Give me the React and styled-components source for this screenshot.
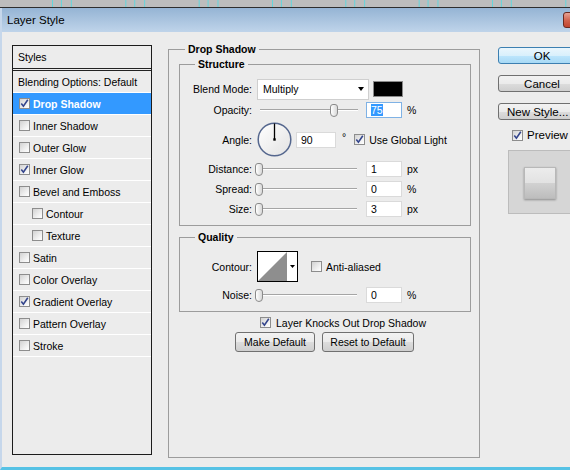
import React from 'react';
import styled, { createGlobalStyle } from 'styled-components';

const GlobalStyle = createGlobalStyle`
  html, body {
    margin: 0;
    padding: 0;
    background: #ececec;
  }
  body {
    font-family: "Liberation Sans", Arial, sans-serif;
    font-size: 10.5px;
    color: #000;
  }
`;

const Page = styled.div`
  width: 570px;
  height: 470px;
  overflow: hidden;
  display: flex;
  flex-direction: column;
  background: #ececec;
`;

/* the ruler strip of the canvas behind the dialog */
const Ruler = styled.div`
  flex: none;
  height: 7px;
  background-color: #bdbdbd;
  background-image: linear-gradient(
    90deg,
    #63d6dc 0 1px,
    transparent 1px 9px,
    #63d6dc 9px 10px,
    transparent 10px 19px,
    #63d6dc 19px 20px,
    transparent 20px
  );
  background-size: 73.33px 100%;
  background-position: 52px 0;
  background-repeat: repeat-x;
  border-bottom: 1px solid #2e2e2e;
`;

const Window = styled.div`
  flex: 1;
  display: flex;
  flex-direction: column;
  border-left: 2px solid #c6d7eb;
  border-bottom: 3px solid #56c2e5;
  min-height: 0;
`;

const TitleBar = styled.div`
  flex: none;
  height: 24px;
  display: flex;
  align-items: center;
  justify-content: space-between;
  padding-left: 5px;
  background: linear-gradient(#95b4d4, #bfd4ea);
  font-size: 11.5px;
`;

const CloseButton = styled.div`
  width: 43px;
  height: 16px;
  margin-right: -36px;
  box-sizing: border-box;
  border: 1px solid #6b2a20;
  border-radius: 3px;
  background: linear-gradient(#e8a294, #d0604a 55%, #c0452f);
`;

const Body = styled.div`
  flex: 1;
  display: flex;
  align-items: flex-start;
  padding-left: 10px;
  background: #ececec;
`;

/* ---------- left list ---------- */

const StylesPanel = styled.div`
  flex: none;
  width: 140px;
  height: 410px;
  margin-top: 13px;
  box-sizing: border-box;
  border: 1px solid #1c1c1c;
  background: #ececec;
`;

const PanelHeader = styled.div`
  height: 22px;
  line-height: 22px;
  padding-left: 5px;
  border-bottom: 3px double #222;
`;

const StyleRow = styled.div`
  height: 21px;
  display: flex;
  align-items: center;
  gap: 3px;
  padding-left: ${p => p.$indent}px;
  border-bottom: 1px solid #fff;
  background: ${p => (p.$selected ? '#3399ff' : 'transparent')};
  color: ${p => (p.$selected ? '#fff' : '#000')};
  font-weight: ${p => (p.$selected ? 'bold' : 'normal')};
`;

/* ---------- checkbox ---------- */

const Box = styled.span`
  flex: none;
  width: 11px;
  height: 11px;
  box-sizing: border-box;
  border: 1px solid #8d8d8d;
  background: linear-gradient(135deg, #d2d2d2 0%, #f4f4f4 70%, #fff 100%);
  display: inline-flex;
  align-items: center;
  justify-content: center;
  margin-left: ${p => p.$ml || 0}px;
`;

function Check({ checked, ml }) {
  return (
    <Box $ml={ml}>
      {checked && (
        <svg width="9" height="9" viewBox="0 0 9 9">
          <path d="M1.3 4.6 L3.4 7.2 L7.8 0.8" fill="none" stroke="#34458c" strokeWidth="1.6" />
        </svg>
      )}
    </Box>
  );
}

/* ---------- middle ---------- */

const Middle = styled.div`
  flex: none;
  margin-left: 16px;
  margin-top: 11px;
`;

const Group = styled.fieldset`
  margin: ${p => p.$mt || 0}px 0 0 0;
  padding: ${p => p.$pad};
  width: ${p => p.$w}px;
  height: ${p => (p.$h ? `${p.$h}px` : 'auto')};
  box-sizing: border-box;
  border: 1px solid #9c9c9c;
  min-width: 0;
`;

const Legend = styled.legend`
  font-weight: bold;
  padding: 0 3px;
  margin-left: ${p => p.$indent}px;
  line-height: 13px;
`;

const Row = styled.div`
  display: flex;
  align-items: center;
  height: ${p => p.$h}px;
  margin-top: ${p => p.$mt || 0}px;
  padding-left: ${p => p.$pl || 0}px;
`;

const Label = styled.span`
  flex: none;
  width: 72px;
  margin-right: 5px;
  text-align: right;
`;

const Select = styled.div`
  flex: none;
  width: 112px;
  height: 21px;
  box-sizing: border-box;
  border: 1px solid #cfcfcf;
  background: #fff;
  display: flex;
  align-items: center;
  justify-content: space-between;
  padding: 0 4px 0 5px;
`;

const Arrow = styled.span`
  width: 0;
  height: 0;
  border-left: 3.5px solid transparent;
  border-right: 3.5px solid transparent;
  border-top: 4px solid #000;
`;

const Swatch = styled.div`
  flex: none;
  width: 30px;
  height: 16px;
  margin-left: 4px;
  box-sizing: border-box;
  border: 1px solid #8a8a8a;
  background: #000;
`;

const Field = styled.div`
  flex: none;
  width: ${p => p.$w || 36}px;
  height: 16px;
  margin-left: ${p => p.$ml}px;
  box-sizing: border-box;
  border: 1px solid ${p => (p.$focus ? '#7fb2e5' : '#dadada')};
  background: #fff;
  padding-left: 4px;
  display: flex;
  align-items: center;
`;

const Selected = styled.span`
  background: #3399ff;
  color: #fff;
`;

const Unit = styled.span`
  margin-left: ${p => p.$ml || 5}px;
  align-self: ${p => (p.$top ? 'flex-start' : 'center')};
  margin-top: ${p => (p.$top ? 11 : 0)}px;
`;

const Track = styled.div`
  flex: none;
  position: relative;
  width: 98px;
  height: 2px;
  margin-left: ${p => p.$ml}px;
  box-sizing: border-box;
  border-top: 1px solid #a5a5a5;
  background: #fff;
`;

const Thumb = styled.div`
  position: absolute;
  top: -6px;
  width: 8px;
  height: 13px;
  box-sizing: border-box;
  border: 1px solid #8a8a8a;
  border-radius: 3px 3px 4px 4px;
  background: linear-gradient(90deg, #fff, #d8d8d8);
`;

function Slider({ value, ml = 2 }) {
  return (
    <Track $ml={ml}>
      <Thumb style={{ left: Math.round((value / 100) * 98) - 4 }} />
    </Track>
  );
}

function Dial() {
  return (
    <svg width="35" height="35" viewBox="0 0 35 35">
      <defs>
        <linearGradient id="dialfill" x1="0" y1="0" x2="1" y2="1">
          <stop offset="0" stopColor="#ffffff" />
          <stop offset="1" stopColor="#e2e2e2" />
        </linearGradient>
      </defs>
      <circle cx="17.5" cy="17.5" r="16.3" fill="url(#dialfill)" stroke="#55678e" strokeWidth="1.5" />
      <line x1="17.5" y1="17.5" x2="17.5" y2="1.5" stroke="#000" strokeWidth="1.3" />
      <rect x="16.3" y="16.3" width="2.4" height="2.4" fill="#000" />
    </svg>
  );
}

function ContourPicker() {
  return (
    <svg width="41" height="31" viewBox="0 0 41 31">
      <rect x="0.5" y="0.5" width="40" height="30" fill="#fff" stroke="#000" />
      <polygon points="1,30 30,1 30,30" fill="#8e8e8e" />
      <polygon points="33,14 38,14 35.5,17" fill="#000" />
    </svg>
  );
}

const ButtonRow = styled.div`
  display: flex;
  gap: 7px;
  margin-top: 2px;
  padding-left: 56px;
`;

const Button = styled.div`
  flex: none;
  width: ${p => p.$w}px;
  height: ${p => p.$h || 20}px;
  box-sizing: border-box;
  border: 1px solid ${p => (p.$primary ? '#3c7fb1' : '#707070')};
  border-radius: 3px;
  background: ${p =>
    p.$primary
      ? 'linear-gradient(#eaf6fd, #d9f0fc 50%, #bee6fd 50%, #a7d9f5)'
      : 'linear-gradient(#f2f2f2, #ebebeb 50%, #dddddd 50%, #cfcfcf)'};
  display: flex;
  align-items: center;
  justify-content: ${p => (p.$left ? 'flex-start' : 'center')};
  padding-left: ${p => (p.$left ? 8 : 0)}px;
  font-size: ${p => p.$fs || 10.5}px;
  margin-bottom: ${p => p.$mb || 0}px;
`;

/* ---------- right ---------- */

const Side = styled.div`
  flex: none;
  width: 88px;
  margin-left: 18px;
  margin-top: 15px;
  font-size: 11px;
`;

const PreviewToggle = styled.div`
  display: flex;
  align-items: center;
  gap: 4px;
  margin-top: 9px;
  padding-left: 14px;
  height: 12px;
  font-size: 11.5px;
`;

const PreviewBox = styled.div`
  width: 64px;
  height: 64px;
  margin-top: 9px;
  margin-left: 10px;
  box-sizing: border-box;
  border: 1px solid #bcbcbc;
  background: #d6d6d6;
  display: flex;
  justify-content: center;
  padding-top: 16px;
`;

const PreviewSwatch = styled.div`
  width: 32px;
  height: 32px;
  box-sizing: border-box;
  border: 1px solid #b8b8b8;
  background: linear-gradient(#ececec, #e2e2e2 50%, #d2d2d2 50%, #bdbdbd);
  box-shadow: 0 1px 2px rgba(0, 0, 0, 0.35);
`;

const listItems = [
  { label: 'Drop Shadow', checked: true, selected: true },
  { label: 'Inner Shadow' },
  { label: 'Outer Glow' },
  { label: 'Inner Glow', checked: true },
  { label: 'Bevel and Emboss' },
  { label: 'Contour', nested: true },
  { label: 'Texture', nested: true },
  { label: 'Satin' },
  { label: 'Color Overlay' },
  { label: 'Gradient Overlay', checked: true },
  { label: 'Pattern Overlay' },
  { label: 'Stroke' },
];

export default function App() {
  return (
    <Page>
      <GlobalStyle />
      <Ruler />
      <Window>
        <TitleBar>
          <span>Layer Style</span>
          <CloseButton />
        </TitleBar>
        <Body>
          <StylesPanel>
            <PanelHeader>Styles</PanelHeader>
            <StyleRow $indent={5}>Blending Options: Default</StyleRow>
            {listItems.map(item => (
              <StyleRow key={item.label} $indent={item.nested ? 19 : 6} $selected={item.selected}>
                <Check checked={item.checked} />
                <span>{item.label}</span>
              </StyleRow>
            ))}
          </StylesPanel>

          <Middle>
            <Group $w={312} $h={415} $pad="0 9px 0 10px">
              <Legend $indent={6}>Drop Shadow</Legend>

              <Group $w={292} $mt={2} $pad="7px 0 6px 0">
                <Legend $indent={15}>Structure</Legend>
                <Row $h={22}>
                  <Label>Blend Mode:</Label>
                  <Select>
                    <span>Multiply</span>
                    <Arrow />
                  </Select>
                  <Swatch />
                </Row>
                <Row $h={20}>
                  <Label>Opacity:</Label>
                  <Slider value={75} ml={3} />
                  <Field $ml={8} $focus>
                    <Selected>75</Selected>
                  </Field>
                  <Unit>%</Unit>
                </Row>
                <Row $h={39}>
                  <Label>Angle:</Label>
                  <Dial />
                  <Field $ml={4} $w={40}>90</Field>
                  <Unit $ml={6} $top>°</Unit>
                  <Check checked ml={8} />
                  <Unit $ml={4}>Use Global Light</Unit>
                </Row>
                <Row $h={20}>
                  <Label>Distance:</Label>
                  <Slider value={0} />
                  <Field $ml={9}>1</Field>
                  <Unit>px</Unit>
                </Row>
                <Row $h={20}>
                  <Label>Spread:</Label>
                  <Slider value={0} />
                  <Field $ml={9}>0</Field>
                  <Unit>%</Unit>
                </Row>
                <Row $h={20}>
                  <Label>Size:</Label>
                  <Slider value={0} />
                  <Field $ml={9}>3</Field>
                  <Unit>px</Unit>
                </Row>
              </Group>

              <Group $w={292} $mt={5} $pad="7px 0 6px 0">
                <Legend $indent={15}>Quality</Legend>
                <Row $h={31}>
                  <Label>Contour:</Label>
                  <ContourPicker />
                  <Check ml={13} />
                  <Unit $ml={4}>Anti-aliased</Unit>
                </Row>
                <Row $h={20} $mt={3}>
                  <Label>Noise:</Label>
                  <Slider value={0} />
                  <Field $ml={9}>0</Field>
                  <Unit>%</Unit>
                </Row>
              </Group>

              <Row $h={15} $mt={3} $pl={81}>
                <Check checked />
                <Unit $ml={5}>Layer Knocks Out Drop Shadow</Unit>
              </Row>
              <ButtonRow>
                <Button $w={80}>Make Default</Button>
                <Button $w={92}>Reset to Default</Button>
              </ButtonRow>
            </Group>
          </Middle>

          <Side>
            <Button $w={88} $h={17} $mb={11} $fs={11.5} $primary>OK</Button>
            <Button $w={88} $h={17} $mb={11} $fs={11.5}>Cancel</Button>
            <Button $w={88} $h={17} $fs={11.5} $left>New Style...</Button>
            <PreviewToggle>
              <Check checked />
              <span>Preview</span>
            </PreviewToggle>
            <PreviewBox>
              <PreviewSwatch />
            </PreviewBox>
          </Side>
        </Body>
      </Window>
    </Page>
  );
}
